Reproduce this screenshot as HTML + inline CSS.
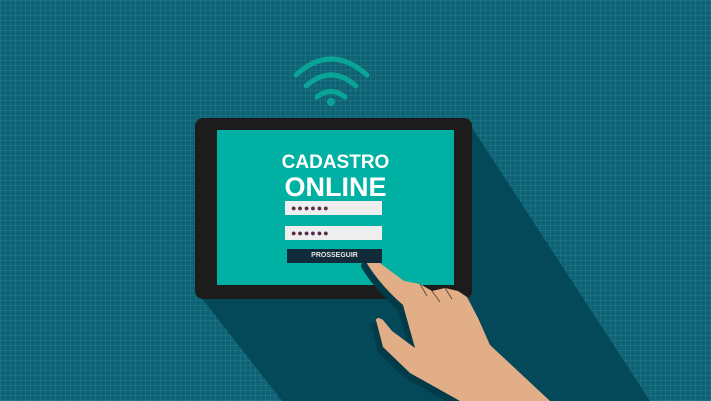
<!DOCTYPE html>
<html><head><style>
html,body{margin:0;padding:0}
body{width:711px;height:401px;overflow:hidden;position:relative;font-family:"Liberation Sans",sans-serif;
background-color:#0f6273;
background-image:repeating-linear-gradient(0deg,rgba(40,140,155,.3) 0 1px,transparent 1px 5px),repeating-linear-gradient(90deg,rgba(40,140,155,.3) 0 1px,transparent 1px 5px);}
svg{position:absolute;left:0;top:0}
.t{position:absolute;color:#fff;font-weight:bold;text-align:center;left:217px;width:237px}
.f{position:absolute;left:285px;width:97px;height:14px;background:#eeeeee;color:#5a2b45;font-size:9px;letter-spacing:1px;line-height:14px;text-indent:6px}
</style></head><body>
<svg width="711" height="401" viewBox="0 0 711 401">
<defs>
<path id="h" d="M366,262 Q366,255 373,258 L404,281 L420,284 L432,291 L445,288 L458,291 L467,297 L478,318 L490,345 L550,401 L460,401 L410,373 L383,347 L376,320 Q377,316 383,320 L392,331 L415,348 L403,305 Q380,285 366,262 Z"/>
</defs>
<polygon points="200,296 467,120 650,401 282,401" fill="#03495a"/>
<g fill="none" stroke="#0aa496" stroke-linecap="round" stroke-width="5">
<path d="M296,75 Q331,43 367,75"/>
<path d="M306,86 Q331,64 356,86"/>
<path d="M317,97 Q331,86 345,97"/>
</g>
<circle cx="331" cy="102" r="4" fill="#0aa496"/>
<rect x="195" y="118" width="277" height="181" rx="8" fill="#1c1c1c"/>
<rect x="217" y="130" width="237" height="155" fill="#00b0a2"/>
<use href="#h" transform="translate(-5,5)" fill="#033a48"/>
<use href="#h" fill="#e2ae88"/>
<path d="M420,284 L427,296 M432,291 L440,302 M445,288 L452,299" stroke="#6b4a36" stroke-width="1" fill="none"/>
</svg>
<div class="t" style="top:152px;font-size:19px">CADASTRO</div>
<div class="t" style="top:172px;font-size:27px">ONLINE</div>
<div class="f" style="top:201px">●●●●●●</div>
<div class="f" style="top:226px">●●●●●●</div>
<div style="position:absolute;left:287px;top:249px;width:95px;height:14px;background:#102b3a;color:#e8e8e8;font-size:7px;font-weight:bold;text-align:center;line-height:14px">PROSSEGUIR</div>
</body></html>
